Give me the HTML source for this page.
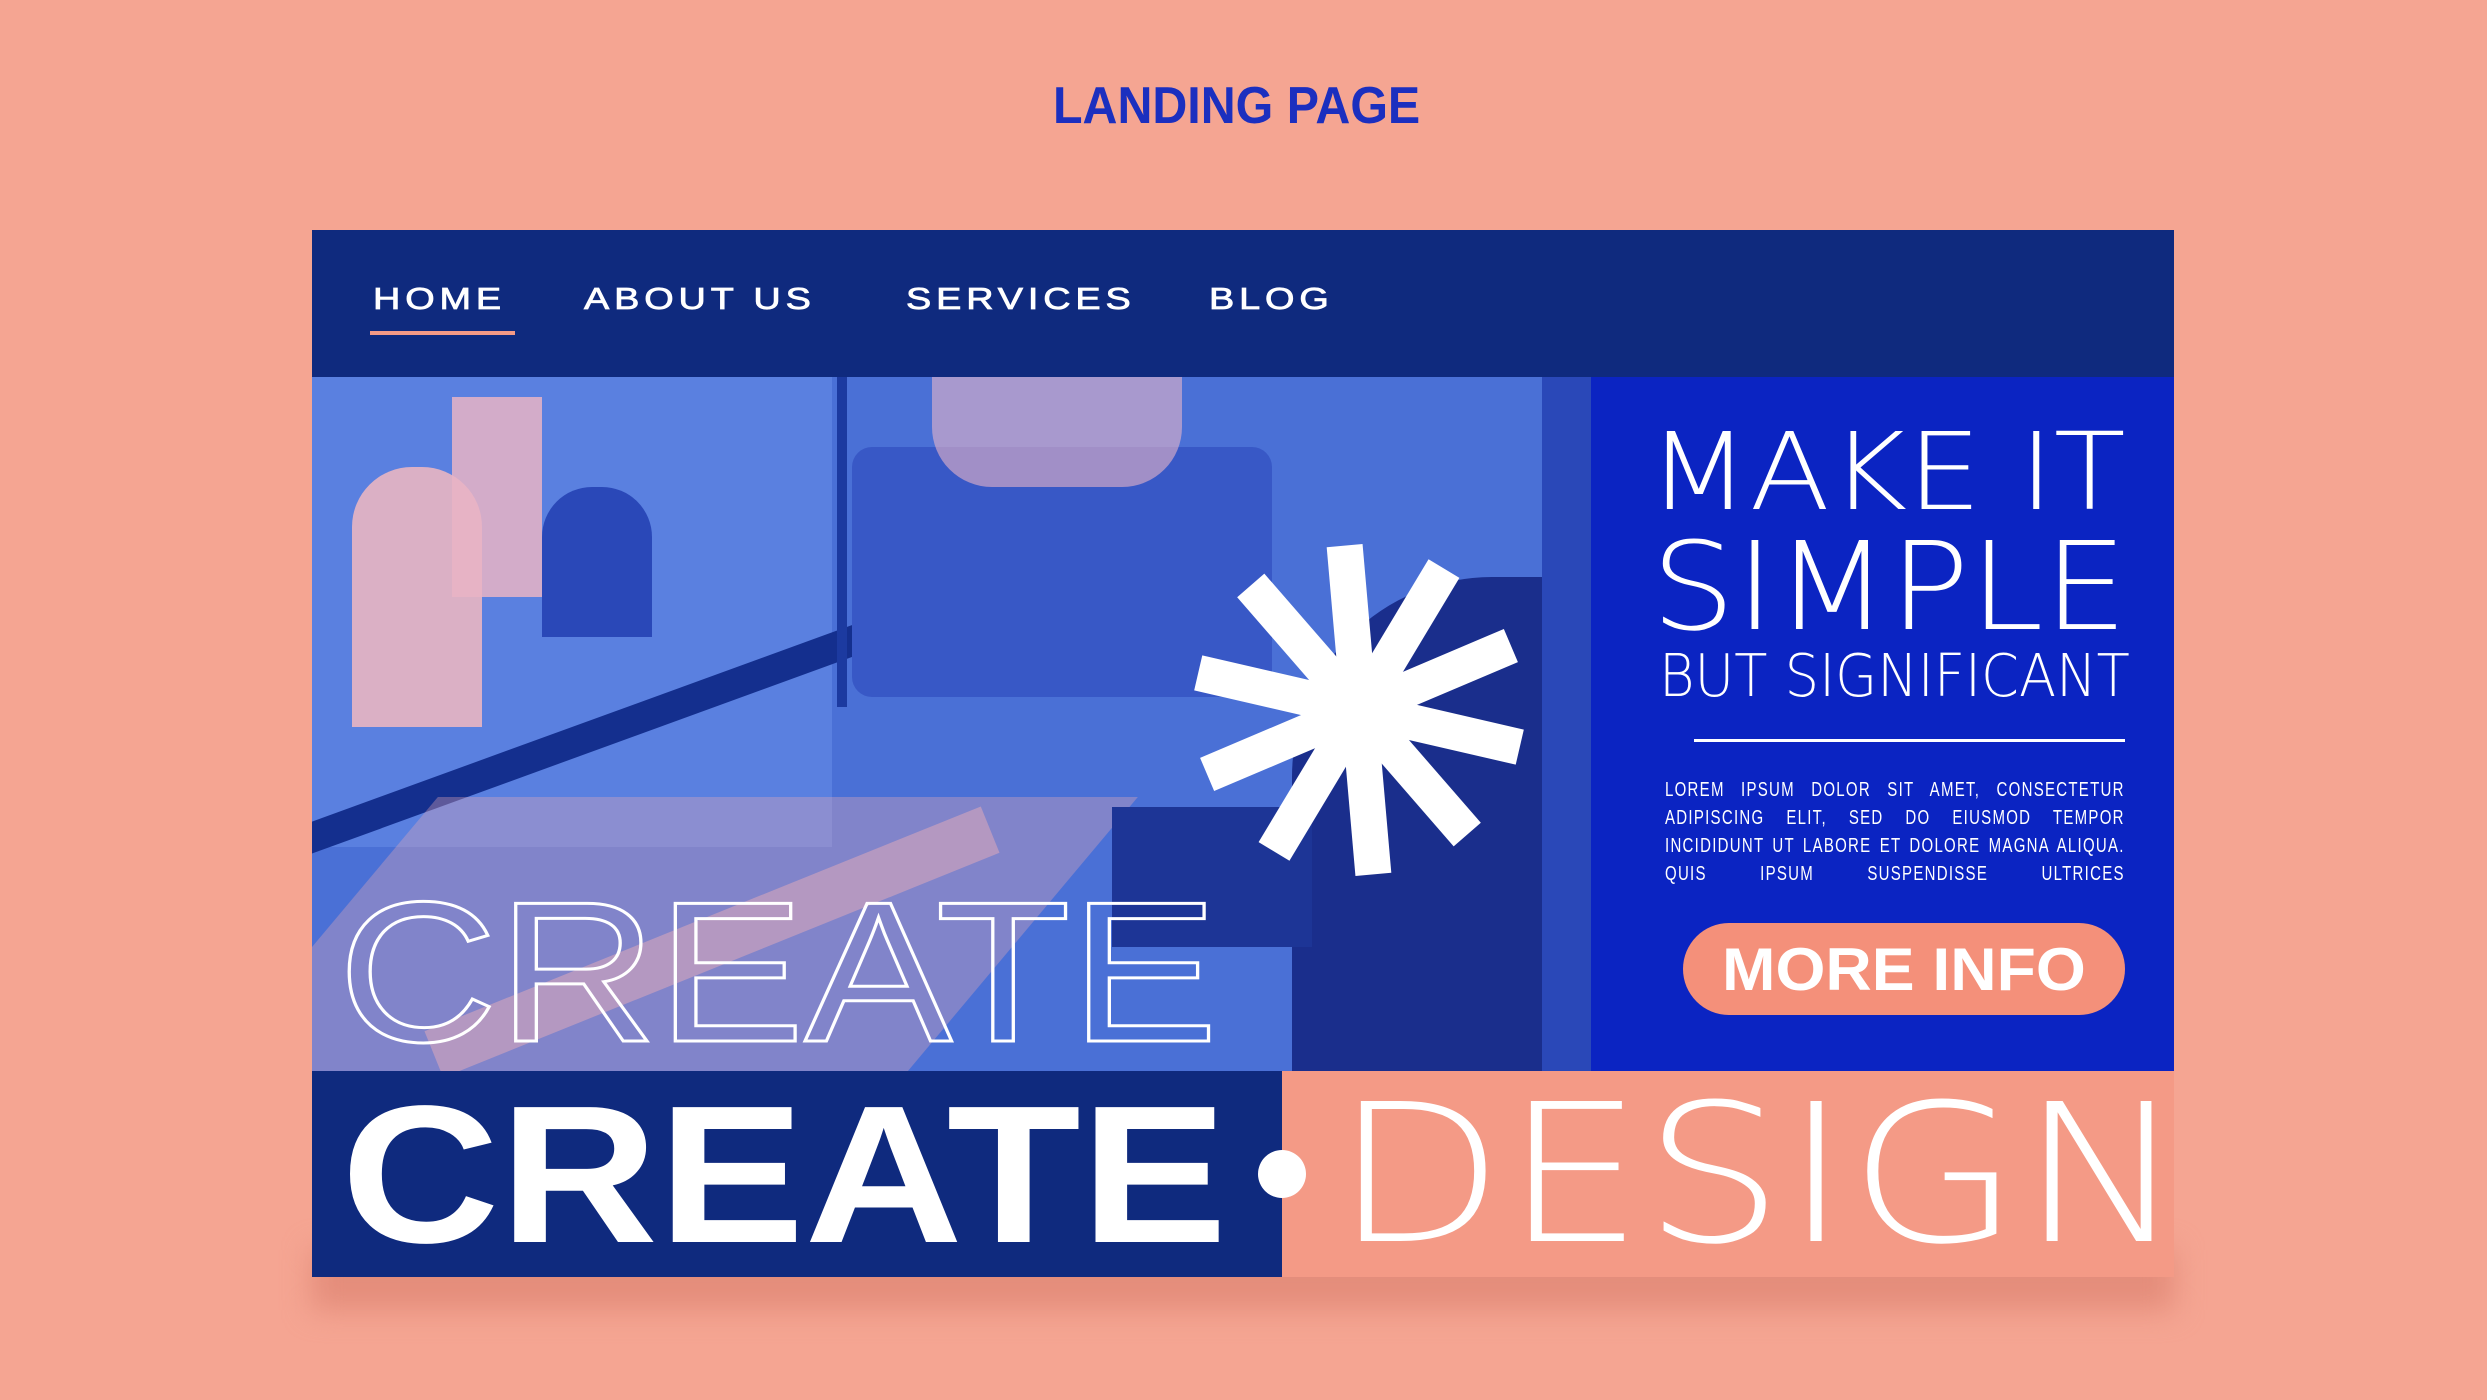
<!DOCTYPE html>
<html><head><meta charset="utf-8"><style>
*{margin:0;padding:0;box-sizing:border-box}
body{width:2487px;height:1400px;background:#f5a592;position:relative;overflow:hidden;font-family:"Liberation Sans",sans-serif}
.a{position:absolute}
.t{position:absolute;white-space:nowrap;transform-origin:0 0;line-height:1}
.n{font-size:31px;color:#fff;letter-spacing:4px;transform:scaleX(1.22);-webkit-text-stroke:0.8px #fff}
.th{font-family:'DejaVu Sans',sans-serif;font-weight:200;color:#fff}
</style></head><body>
<div class="t" style="left:1053px;top:80px;font-size:52px;font-weight:bold;color:#1b2fbf;transform:scaleX(0.93)">LANDING PAGE</div>

<div class="a" style="left:312px;top:1250px;width:1862px;height:60px;background:#e48d7b;filter:blur(14px)"></div>

<!-- nav -->
<div class="a" style="left:312px;top:230px;width:1862px;height:147px;background:#0f2a7e"></div>
<div class="t n" style="left:373px;top:283px">HOME</div>
<div class="t n" style="left:584px;top:283px">ABOUT US</div>
<div class="t n" style="left:906px;top:283px">SERVICES</div>
<div class="t n" style="left:1209px;top:283px">BLOG</div>
<div class="a" style="left:370px;top:331px;width:145px;height:4px;background:#f49a86"></div>

<!-- photo -->
<div class="a" style="left:312px;top:377px;width:1279px;height:694px;background:#4a70d6;overflow:hidden">
  <div class="a" style="left:0;top:0;width:520px;height:470px;background:#5a80e0"></div>
  <div class="a" style="left:40px;top:90px;width:130px;height:260px;background:#f2b8c0;border-radius:60px 60px 0 0;opacity:.85"></div>
  <div class="a" style="left:140px;top:20px;width:90px;height:200px;background:#e9b4c4;opacity:.85"></div>
  <div class="a" style="left:230px;top:110px;width:110px;height:150px;background:#2a48b8;border-radius:50px 50px 0 0"></div>
  <div class="a" style="left:-50px;top:300px;width:900px;height:30px;background:#142f8e;transform:rotate(-20deg)"></div>
  <div class="a" style="left:525px;top:0;width:10px;height:330px;background:#1c3aa0"></div>
  <div class="a" style="left:540px;top:70px;width:420px;height:250px;background:#3858c6;border-radius:20px"></div>
  <div class="a" style="left:620px;top:0;width:250px;height:110px;background:#e7b4c8;border-radius:0 0 60px 60px;opacity:.6"></div>
  <div class="a" style="left:0;top:420px;width:700px;height:300px;background:#e9a9b4;opacity:.35;transform:skewX(-40deg)"></div>
  <div class="a" style="left:980px;top:200px;width:400px;height:520px;background:#1a2e8c;border-radius:200px 0 0 0"></div>
  <div class="a" style="left:800px;top:430px;width:200px;height:140px;background:#1d3596"></div>
  <div class="a" style="left:100px;top:540px;width:600px;height:50px;background:#f2b1b6;opacity:.45;transform:rotate(-22deg)"></div>
  <div class="a" style="left:1230px;top:0;width:50px;height:694px;background:#2a48b8"></div>
  <!-- asterisk -->
  <div class="a" style="left:1047px;top:333px;width:0;height:0">
    <div class="a" style="left:-18px;top:-165px;width:36px;height:330px;background:#fff;transform:rotate(-5deg)"></div>
    <div class="a" style="left:-18px;top:-165px;width:36px;height:330px;background:#fff;transform:rotate(31deg)"></div>
    <div class="a" style="left:-18px;top:-165px;width:36px;height:330px;background:#fff;transform:rotate(67deg)"></div>
    <div class="a" style="left:-18px;top:-165px;width:36px;height:330px;background:#fff;transform:rotate(103deg)"></div>
    <div class="a" style="left:-18px;top:-165px;width:36px;height:330px;background:#fff;transform:rotate(139deg)"></div>
  </div>
  <div class="t" style="left:26px;top:496px;font-size:200px;color:transparent;-webkit-text-stroke:3px #fff;transform:scaleX(1.105)">CREATE</div>
</div>

<!-- right panel -->
<div class="a" style="left:1591px;top:377px;width:583px;height:694px;background:#0b24c2"></div>
<div class="t th" style="left:1648px;top:420px;font-size:107px;transform:scaleX(1.1)">MAKE IT</div>
<div class="t th" style="left:1651px;top:526px;font-size:122px;transform:scaleX(1.09)">SIMPLE</div>
<div class="t th" style="left:1659px;top:646px;font-size:59px;transform:scaleX(0.92)">BUT SIGNIFICANT</div>
<div class="a" style="left:1694px;top:739px;width:431px;height:3px;background:#fff"></div>
<div class="a" style="left:1665px;top:776px;width:613px;font-size:20px;line-height:28px;color:#fff;text-align:justify;text-align-last:justify;letter-spacing:1.7px;transform:scaleX(0.75);transform-origin:0 0">LOREM IPSUM DOLOR SIT AMET, CONSECTETUR ADIPISCING ELIT, SED DO EIUSMOD TEMPOR INCIDIDUNT UT LABORE ET DOLORE MAGNA ALIQUA. QUIS IPSUM SUSPENDISSE ULTRICES</div>
<div class="a" style="left:1683px;top:923px;width:442px;height:92px;background:#f4907a;border-radius:46px"></div>
<div class="t" style="left:1722px;top:940px;font-size:60px;font-weight:bold;color:#fff;transform:scaleX(1.07)">MORE INFO</div>

<!-- bottom -->
<div class="a" style="left:312px;top:1071px;width:970px;height:206px;background:#0f2a7e"></div>
<div class="a" style="left:1282px;top:1071px;width:892px;height:206px;background:#f49a86"></div>
<div class="t" style="left:341px;top:1077px;font-size:196px;font-weight:bold;color:#fff;transform:scaleX(1.12)">CREATE</div>
<div class="a" style="left:1258px;top:1150px;width:48px;height:48px;border-radius:50%;background:#fff"></div>
<div class="t th" style="left:1334px;top:1080px;font-size:192px;transform:scaleX(1.15)">DESIGN</div>
</body></html>
